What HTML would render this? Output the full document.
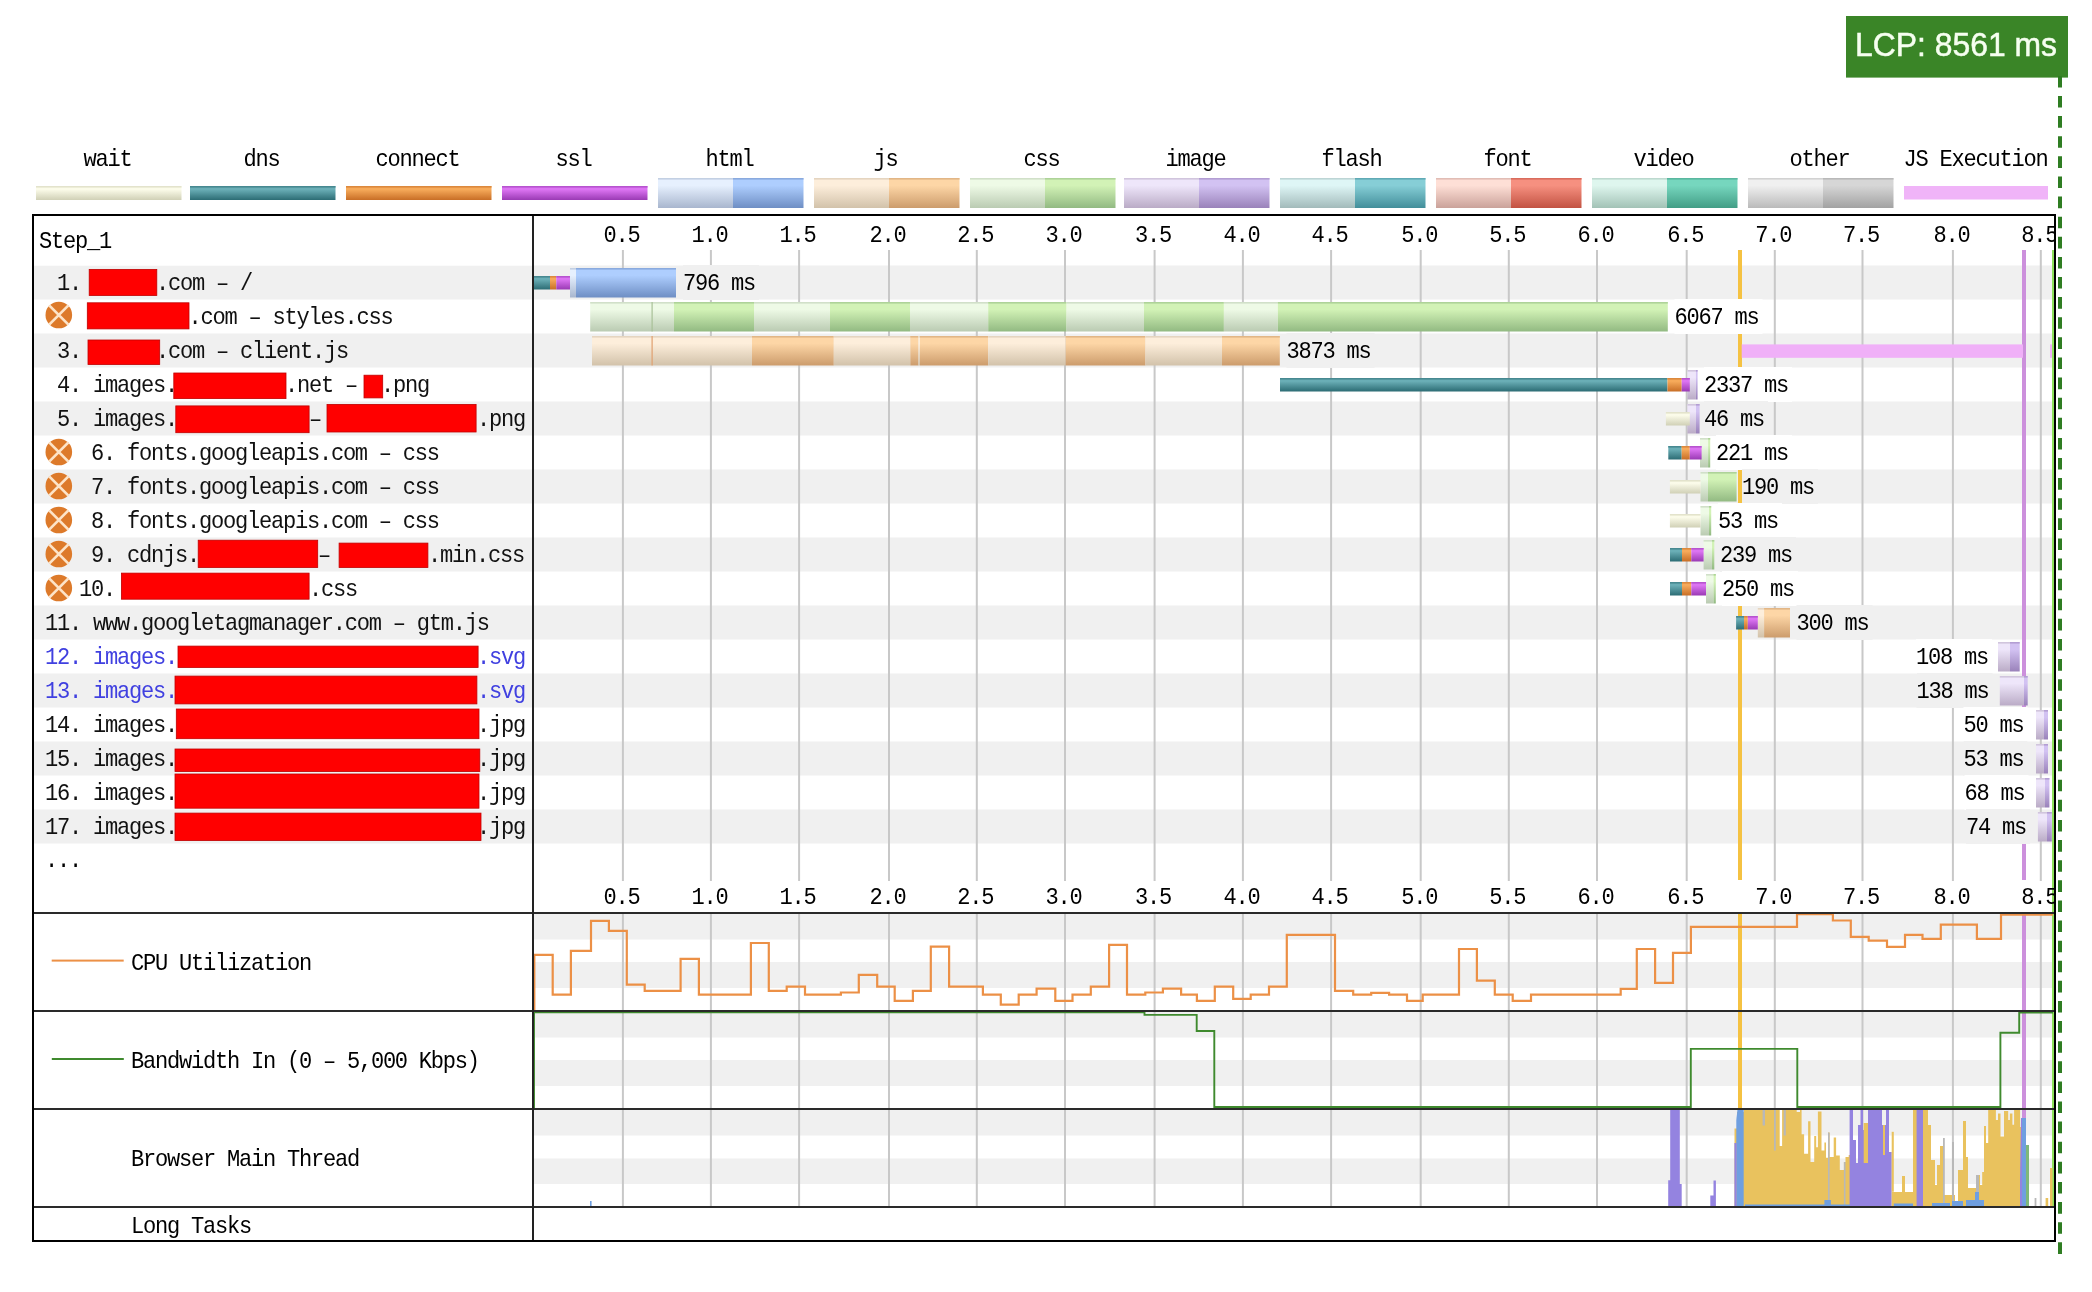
<!DOCTYPE html>
<html><head><meta charset="utf-8"><title>waterfall</title>
<style>html,body{margin:0;padding:0;background:#fff;overflow:hidden;width:2092px;height:1292px} svg{display:block;will-change:transform} </style>
</head><body>
<svg width="2092" height="1292" viewBox="0 0 2092 1292" shape-rendering="geometricPrecision"><defs><linearGradient id="g_wait" x1="0" y1="0" x2="0" y2="1"><stop offset="0" stop-color="#fbfbe9"/><stop offset="0.25" stop-color="#fbfbe9"/><stop offset="1" stop-color="#d0d0b6"/></linearGradient><linearGradient id="g_dns" x1="0" y1="0" x2="0" y2="1"><stop offset="0" stop-color="#6aaeb6"/><stop offset="0.25" stop-color="#6aaeb6"/><stop offset="1" stop-color="#2c6c74"/></linearGradient><linearGradient id="g_connect" x1="0" y1="0" x2="0" y2="1"><stop offset="0" stop-color="#f6aa5a"/><stop offset="0.25" stop-color="#f6aa5a"/><stop offset="1" stop-color="#c86e26"/></linearGradient><linearGradient id="g_ssl" x1="0" y1="0" x2="0" y2="1"><stop offset="0" stop-color="#dc74f2"/><stop offset="0.25" stop-color="#dc74f2"/><stop offset="1" stop-color="#9a3ab4"/></linearGradient><linearGradient id="g_html_l" x1="0" y1="0" x2="0" y2="1"><stop offset="0" stop-color="#e6f0fe"/><stop offset="0.25" stop-color="#e6f0fe"/><stop offset="1" stop-color="#a8b6ce"/></linearGradient><linearGradient id="g_html_d" x1="0" y1="0" x2="0" y2="1"><stop offset="0" stop-color="#aecefe"/><stop offset="0.25" stop-color="#aecefe"/><stop offset="1" stop-color="#6e8ec4"/></linearGradient><linearGradient id="g_js_l" x1="0" y1="0" x2="0" y2="1"><stop offset="0" stop-color="#fdeedb"/><stop offset="0.25" stop-color="#fdeedb"/><stop offset="1" stop-color="#d2c2aa"/></linearGradient><linearGradient id="g_js_d" x1="0" y1="0" x2="0" y2="1"><stop offset="0" stop-color="#fdd6a6"/><stop offset="0.25" stop-color="#fdd6a6"/><stop offset="1" stop-color="#cc9c6c"/></linearGradient><linearGradient id="g_css_l" x1="0" y1="0" x2="0" y2="1"><stop offset="0" stop-color="#eefae6"/><stop offset="0.25" stop-color="#eefae6"/><stop offset="1" stop-color="#bacbb2"/></linearGradient><linearGradient id="g_css_d" x1="0" y1="0" x2="0" y2="1"><stop offset="0" stop-color="#d2f2b6"/><stop offset="0.25" stop-color="#d2f2b6"/><stop offset="1" stop-color="#92ba82"/></linearGradient><linearGradient id="g_img_l" x1="0" y1="0" x2="0" y2="1"><stop offset="0" stop-color="#eee6fa"/><stop offset="0.25" stop-color="#eee6fa"/><stop offset="1" stop-color="#baabc6"/></linearGradient><linearGradient id="g_img_d" x1="0" y1="0" x2="0" y2="1"><stop offset="0" stop-color="#d2c2f2"/><stop offset="0.25" stop-color="#d2c2f2"/><stop offset="1" stop-color="#9a82ba"/></linearGradient><linearGradient id="g_flash_l" x1="0" y1="0" x2="0" y2="1"><stop offset="0" stop-color="#def6f6"/><stop offset="0.25" stop-color="#def6f6"/><stop offset="1" stop-color="#a2baba"/></linearGradient><linearGradient id="g_flash_d" x1="0" y1="0" x2="0" y2="1"><stop offset="0" stop-color="#86ced6"/><stop offset="0.25" stop-color="#86ced6"/><stop offset="1" stop-color="#428e9a"/></linearGradient><linearGradient id="g_font_l" x1="0" y1="0" x2="0" y2="1"><stop offset="0" stop-color="#fedfd6"/><stop offset="0.25" stop-color="#fedfd6"/><stop offset="1" stop-color="#caa29a"/></linearGradient><linearGradient id="g_font_d" x1="0" y1="0" x2="0" y2="1"><stop offset="0" stop-color="#f69080"/><stop offset="0.25" stop-color="#f69080"/><stop offset="1" stop-color="#c25242"/></linearGradient><linearGradient id="g_video_l" x1="0" y1="0" x2="0" y2="1"><stop offset="0" stop-color="#def6ee"/><stop offset="0.25" stop-color="#def6ee"/><stop offset="1" stop-color="#a2c2b6"/></linearGradient><linearGradient id="g_video_d" x1="0" y1="0" x2="0" y2="1"><stop offset="0" stop-color="#76d6be"/><stop offset="0.25" stop-color="#76d6be"/><stop offset="1" stop-color="#429e86"/></linearGradient><linearGradient id="g_other_l" x1="0" y1="0" x2="0" y2="1"><stop offset="0" stop-color="#f0f0f0"/><stop offset="0.25" stop-color="#f0f0f0"/><stop offset="1" stop-color="#bababa"/></linearGradient><linearGradient id="g_other_d" x1="0" y1="0" x2="0" y2="1"><stop offset="0" stop-color="#d6d6d6"/><stop offset="0.25" stop-color="#d6d6d6"/><stop offset="1" stop-color="#a2a2a2"/></linearGradient></defs><rect width="2092" height="1292" fill="#fff"/><rect x="1846.00" y="16.00" width="222.00" height="61.60" fill="#3a8527" />
<text x="1855" y="56.3" stroke="#f6fff0" stroke-width="0.5" style="font-family:'Liberation Sans',sans-serif" font-size="33" fill="#f6fff0" textLength="202" lengthAdjust="spacingAndGlyphs">LCP: 8561 ms</text>
<text transform="translate(83.55,166.00) scale(0.92,1)" font-family="Liberation Mono" font-size="24" letter-spacing="-1.357" fill="#000" stroke="#ffffff" stroke-width="0.0" xml:space="preserve">wait</text>
<rect x="36.00" y="186.00" width="145.50" height="14.00" fill="url(#g_wait)" />
<rect x="36.00" y="186.00" width="145.50" height="1.60" fill="#e3e3cc" />
<text transform="translate(243.55,166.00) scale(0.92,1)" font-family="Liberation Mono" font-size="24" letter-spacing="-1.357" fill="#000" stroke="#ffffff" stroke-width="0.0" xml:space="preserve">dns</text>
<rect x="190.00" y="186.00" width="145.50" height="14.00" fill="url(#g_dns)" />
<rect x="190.00" y="186.00" width="145.50" height="1.60" fill="#478991" />
<text transform="translate(375.55,166.00) scale(0.92,1)" font-family="Liberation Mono" font-size="24" letter-spacing="-1.357" fill="#000" stroke="#ffffff" stroke-width="0.0" xml:space="preserve">connect</text>
<rect x="346.00" y="186.00" width="145.50" height="14.00" fill="url(#g_connect)" />
<rect x="346.00" y="186.00" width="145.50" height="1.60" fill="#dc893d" />
<text transform="translate(555.55,166.00) scale(0.92,1)" font-family="Liberation Mono" font-size="24" letter-spacing="-1.357" fill="#000" stroke="#ffffff" stroke-width="0.0" xml:space="preserve">ssl</text>
<rect x="502.00" y="186.00" width="145.50" height="14.00" fill="url(#g_ssl)" />
<rect x="502.00" y="186.00" width="145.50" height="1.60" fill="#b754cf" />
<text transform="translate(705.55,166.00) scale(0.92,1)" font-family="Liberation Mono" font-size="24" letter-spacing="-1.357" fill="#000" stroke="#ffffff" stroke-width="0.0" xml:space="preserve">html</text>
<rect x="658.00" y="178.00" width="75.00" height="30.00" fill="url(#g_html_l)" />
<rect x="658.00" y="178.00" width="75.00" height="1.60" fill="#c3d0e3" />
<rect x="733.00" y="178.00" width="70.50" height="30.00" fill="url(#g_html_d)" />
<rect x="733.00" y="178.00" width="70.50" height="1.60" fill="#8aaade" />
<text transform="translate(873.55,166.00) scale(0.92,1)" font-family="Liberation Mono" font-size="24" letter-spacing="-1.357" fill="#000" stroke="#ffffff" stroke-width="0.0" xml:space="preserve">js</text>
<rect x="814.00" y="178.00" width="75.00" height="30.00" fill="url(#g_js_l)" />
<rect x="814.00" y="178.00" width="75.00" height="1.60" fill="#e5d5c0" />
<rect x="889.00" y="178.00" width="70.50" height="30.00" fill="url(#g_js_d)" />
<rect x="889.00" y="178.00" width="70.50" height="1.60" fill="#e2b686" />
<text transform="translate(1023.55,166.00) scale(0.92,1)" font-family="Liberation Mono" font-size="24" letter-spacing="-1.357" fill="#000" stroke="#ffffff" stroke-width="0.0" xml:space="preserve">css</text>
<rect x="970.00" y="178.00" width="75.00" height="30.00" fill="url(#g_css_l)" />
<rect x="970.00" y="178.00" width="75.00" height="1.60" fill="#d1e0c9" />
<rect x="1045.00" y="178.00" width="70.50" height="30.00" fill="url(#g_css_d)" />
<rect x="1045.00" y="178.00" width="70.50" height="1.60" fill="#aed399" />
<text transform="translate(1165.55,166.00) scale(0.92,1)" font-family="Liberation Mono" font-size="24" letter-spacing="-1.357" fill="#000" stroke="#ffffff" stroke-width="0.0" xml:space="preserve">image</text>
<rect x="1124.00" y="178.00" width="75.00" height="30.00" fill="url(#g_img_l)" />
<rect x="1124.00" y="178.00" width="75.00" height="1.60" fill="#d1c5dd" />
<rect x="1199.00" y="178.00" width="70.50" height="30.00" fill="url(#g_img_d)" />
<rect x="1199.00" y="178.00" width="70.50" height="1.60" fill="#b39ed3" />
<text transform="translate(1321.55,166.00) scale(0.92,1)" font-family="Liberation Mono" font-size="24" letter-spacing="-1.357" fill="#000" stroke="#ffffff" stroke-width="0.0" xml:space="preserve">flash</text>
<rect x="1280.00" y="178.00" width="75.00" height="30.00" fill="url(#g_flash_l)" />
<rect x="1280.00" y="178.00" width="75.00" height="1.60" fill="#bdd5d5" />
<rect x="1355.00" y="178.00" width="70.50" height="30.00" fill="url(#g_flash_d)" />
<rect x="1355.00" y="178.00" width="70.50" height="1.60" fill="#60aab5" />
<text transform="translate(1483.55,166.00) scale(0.92,1)" font-family="Liberation Mono" font-size="24" letter-spacing="-1.357" fill="#000" stroke="#ffffff" stroke-width="0.0" xml:space="preserve">font</text>
<rect x="1436.00" y="178.00" width="75.00" height="30.00" fill="url(#g_font_l)" />
<rect x="1436.00" y="178.00" width="75.00" height="1.60" fill="#e1bdb5" />
<rect x="1511.00" y="178.00" width="70.50" height="30.00" fill="url(#g_font_d)" />
<rect x="1511.00" y="178.00" width="70.50" height="1.60" fill="#d96d5d" />
<text transform="translate(1633.55,166.00) scale(0.92,1)" font-family="Liberation Mono" font-size="24" letter-spacing="-1.357" fill="#000" stroke="#ffffff" stroke-width="0.0" xml:space="preserve">video</text>
<rect x="1592.00" y="178.00" width="75.00" height="30.00" fill="url(#g_video_l)" />
<rect x="1592.00" y="178.00" width="75.00" height="1.60" fill="#bdd9cf" />
<rect x="1667.00" y="178.00" width="70.50" height="30.00" fill="url(#g_video_d)" />
<rect x="1667.00" y="178.00" width="70.50" height="1.60" fill="#59b79f" />
<text transform="translate(1789.55,166.00) scale(0.92,1)" font-family="Liberation Mono" font-size="24" letter-spacing="-1.357" fill="#000" stroke="#ffffff" stroke-width="0.0" xml:space="preserve">other</text>
<rect x="1748.00" y="178.00" width="75.00" height="30.00" fill="url(#g_other_l)" />
<rect x="1748.00" y="178.00" width="75.00" height="1.60" fill="#d2d2d2" />
<rect x="1823.00" y="178.00" width="70.50" height="30.00" fill="url(#g_other_d)" />
<rect x="1823.00" y="178.00" width="70.50" height="1.60" fill="#b9b9b9" />
<text transform="translate(1903.55,166.00) scale(0.92,1)" font-family="Liberation Mono" font-size="24" letter-spacing="-1.357" fill="#000" stroke="#ffffff" stroke-width="0.0" xml:space="preserve">JS Execution</text>
<rect x="1904.00" y="186.00" width="144.00" height="13.50" fill="#f0b4f8" />
<rect x="34.00" y="265.50" width="2020.00" height="34.00" fill="#f0f0f0" />
<rect x="34.00" y="333.50" width="2020.00" height="34.00" fill="#f0f0f0" />
<rect x="34.00" y="401.50" width="2020.00" height="34.00" fill="#f0f0f0" />
<rect x="34.00" y="469.50" width="2020.00" height="34.00" fill="#f0f0f0" />
<rect x="34.00" y="537.50" width="2020.00" height="34.00" fill="#f0f0f0" />
<rect x="34.00" y="605.50" width="2020.00" height="34.00" fill="#f0f0f0" />
<rect x="34.00" y="673.50" width="2020.00" height="34.00" fill="#f0f0f0" />
<rect x="34.00" y="741.50" width="2020.00" height="34.00" fill="#f0f0f0" />
<rect x="34.00" y="809.50" width="2020.00" height="34.00" fill="#f0f0f0" />
<rect x="621.90" y="250.00" width="2.00" height="631.00" fill="#c8c8c8" />
<rect x="709.90" y="250.00" width="2.00" height="631.00" fill="#c8c8c8" />
<rect x="798.10" y="250.00" width="2.00" height="631.00" fill="#c8c8c8" />
<rect x="888.00" y="250.00" width="2.00" height="631.00" fill="#c8c8c8" />
<rect x="975.80" y="250.00" width="2.00" height="631.00" fill="#c8c8c8" />
<rect x="1064.00" y="250.00" width="2.00" height="631.00" fill="#c8c8c8" />
<rect x="1153.60" y="250.00" width="2.00" height="631.00" fill="#c8c8c8" />
<rect x="1241.90" y="250.00" width="2.00" height="631.00" fill="#c8c8c8" />
<rect x="1330.10" y="250.00" width="2.00" height="631.00" fill="#c8c8c8" />
<rect x="1419.70" y="250.00" width="2.00" height="631.00" fill="#c8c8c8" />
<rect x="1507.80" y="250.00" width="2.00" height="631.00" fill="#c8c8c8" />
<rect x="1596.00" y="250.00" width="2.00" height="631.00" fill="#c8c8c8" />
<rect x="1685.70" y="250.00" width="2.00" height="631.00" fill="#c8c8c8" />
<rect x="1773.80" y="250.00" width="2.00" height="631.00" fill="#c8c8c8" />
<rect x="1861.50" y="250.00" width="2.00" height="631.00" fill="#c8c8c8" />
<rect x="1951.90" y="250.00" width="2.00" height="631.00" fill="#c8c8c8" />
<rect x="2039.80" y="250.00" width="2.00" height="631.00" fill="#c8c8c8" />
<rect x="534.00" y="914.00" width="1520.00" height="25.50" fill="#f0f0f0" />
<rect x="534.00" y="962.00" width="1520.00" height="26.00" fill="#f0f0f0" />
<rect x="534.00" y="1012.00" width="1520.00" height="25.50" fill="#f0f0f0" />
<rect x="534.00" y="1060.00" width="1520.00" height="26.00" fill="#f0f0f0" />
<rect x="534.00" y="1110.00" width="1520.00" height="25.50" fill="#f0f0f0" />
<rect x="534.00" y="1158.50" width="1520.00" height="25.50" fill="#f0f0f0" />
<rect x="621.90" y="914.00" width="2.00" height="292.00" fill="#c8c8c8" />
<rect x="709.90" y="914.00" width="2.00" height="292.00" fill="#c8c8c8" />
<rect x="798.10" y="914.00" width="2.00" height="292.00" fill="#c8c8c8" />
<rect x="888.00" y="914.00" width="2.00" height="292.00" fill="#c8c8c8" />
<rect x="975.80" y="914.00" width="2.00" height="292.00" fill="#c8c8c8" />
<rect x="1064.00" y="914.00" width="2.00" height="292.00" fill="#c8c8c8" />
<rect x="1153.60" y="914.00" width="2.00" height="292.00" fill="#c8c8c8" />
<rect x="1241.90" y="914.00" width="2.00" height="292.00" fill="#c8c8c8" />
<rect x="1330.10" y="914.00" width="2.00" height="292.00" fill="#c8c8c8" />
<rect x="1419.70" y="914.00" width="2.00" height="292.00" fill="#c8c8c8" />
<rect x="1507.80" y="914.00" width="2.00" height="292.00" fill="#c8c8c8" />
<rect x="1596.00" y="914.00" width="2.00" height="292.00" fill="#c8c8c8" />
<rect x="1685.70" y="914.00" width="2.00" height="292.00" fill="#c8c8c8" />
<rect x="1773.80" y="914.00" width="2.00" height="292.00" fill="#c8c8c8" />
<rect x="1861.50" y="914.00" width="2.00" height="292.00" fill="#c8c8c8" />
<rect x="1951.90" y="914.00" width="2.00" height="292.00" fill="#c8c8c8" />
<rect x="2039.80" y="914.00" width="2.00" height="292.00" fill="#c8c8c8" />
<rect x="1738.00" y="250.00" width="4.00" height="630.00" fill="#f5c242" />
<rect x="1738.00" y="914.00" width="4.00" height="292.00" fill="#f5c242" />
<rect x="2022.00" y="250.00" width="4.00" height="630.00" fill="#cc90dc" />
<rect x="2022.00" y="914.00" width="4.00" height="292.00" fill="#cc90dc" />
<rect x="2052.00" y="250.00" width="2.00" height="956.00" fill="#8ee05a" />
<rect x="570.00" y="268.00" width="6.00" height="29.50" fill="url(#g_html_l)" />
<rect x="570.00" y="268.00" width="6.00" height="1.60" fill="#c3d0e3" />
<rect x="576.00" y="268.00" width="100.00" height="29.50" fill="url(#g_html_d)" />
<rect x="576.00" y="268.00" width="100.00" height="1.60" fill="#8aaade" />
<rect x="534.00" y="276.00" width="16.00" height="13.50" fill="url(#g_dns)" />
<rect x="534.00" y="276.00" width="16.00" height="1.60" fill="#478991" />
<rect x="550.00" y="276.00" width="6.30" height="13.50" fill="url(#g_connect)" />
<rect x="550.00" y="276.00" width="6.30" height="1.60" fill="#dc893d" />
<rect x="556.30" y="276.00" width="13.70" height="13.50" fill="url(#g_ssl)" />
<rect x="556.30" y="276.00" width="13.70" height="1.60" fill="#b754cf" />
<rect x="590.20" y="302.00" width="61.80" height="29.50" fill="url(#g_css_l)" />
<rect x="590.20" y="302.00" width="61.80" height="1.60" fill="#d1e0c9" />
<rect x="652.00" y="302.00" width="22.00" height="29.50" fill="url(#g_css_l)" />
<rect x="652.00" y="302.00" width="22.00" height="1.60" fill="#d1e0c9" />
<rect x="674.00" y="302.00" width="80.00" height="29.50" fill="url(#g_css_d)" />
<rect x="674.00" y="302.00" width="80.00" height="1.60" fill="#aed399" />
<rect x="754.00" y="302.00" width="76.00" height="29.50" fill="url(#g_css_l)" />
<rect x="754.00" y="302.00" width="76.00" height="1.60" fill="#d1e0c9" />
<rect x="830.00" y="302.00" width="80.00" height="29.50" fill="url(#g_css_d)" />
<rect x="830.00" y="302.00" width="80.00" height="1.60" fill="#aed399" />
<rect x="910.00" y="302.00" width="78.20" height="29.50" fill="url(#g_css_l)" />
<rect x="910.00" y="302.00" width="78.20" height="1.60" fill="#d1e0c9" />
<rect x="988.20" y="302.00" width="78.40" height="29.50" fill="url(#g_css_d)" />
<rect x="988.20" y="302.00" width="78.40" height="1.60" fill="#aed399" />
<rect x="1066.60" y="302.00" width="77.40" height="29.50" fill="url(#g_css_l)" />
<rect x="1066.60" y="302.00" width="77.40" height="1.60" fill="#d1e0c9" />
<rect x="1144.00" y="302.00" width="79.90" height="29.50" fill="url(#g_css_d)" />
<rect x="1144.00" y="302.00" width="79.90" height="1.60" fill="#aed399" />
<rect x="1223.90" y="302.00" width="53.90" height="29.50" fill="url(#g_css_l)" />
<rect x="1223.90" y="302.00" width="53.90" height="1.60" fill="#d1e0c9" />
<rect x="1277.80" y="302.00" width="390.00" height="29.50" fill="url(#g_css_d)" />
<rect x="1277.80" y="302.00" width="390.00" height="1.60" fill="#aed399" />
<rect x="651.50" y="302.00" width="1.20" height="29.50" fill="#a8c098" />
<rect x="592.00" y="336.00" width="60.00" height="29.50" fill="url(#g_js_l)" />
<rect x="592.00" y="336.00" width="60.00" height="1.60" fill="#e5d5c0" />
<rect x="652.00" y="336.00" width="100.00" height="29.50" fill="url(#g_js_l)" />
<rect x="652.00" y="336.00" width="100.00" height="1.60" fill="#e5d5c0" />
<rect x="752.00" y="336.00" width="81.80" height="29.50" fill="url(#g_js_d)" />
<rect x="752.00" y="336.00" width="81.80" height="1.60" fill="#e2b686" />
<rect x="833.80" y="336.00" width="76.50" height="29.50" fill="url(#g_js_l)" />
<rect x="833.80" y="336.00" width="76.50" height="1.60" fill="#e5d5c0" />
<rect x="910.30" y="336.00" width="8.20" height="29.50" fill="url(#g_js_d)" />
<rect x="910.30" y="336.00" width="8.20" height="1.60" fill="#e2b686" />
<rect x="918.50" y="336.00" width="1.50" height="29.50" fill="url(#g_js_l)" />
<rect x="918.50" y="336.00" width="1.50" height="1.60" fill="#e5d5c0" />
<rect x="920.00" y="336.00" width="68.20" height="29.50" fill="url(#g_js_d)" />
<rect x="920.00" y="336.00" width="68.20" height="1.60" fill="#e2b686" />
<rect x="988.20" y="336.00" width="77.40" height="29.50" fill="url(#g_js_l)" />
<rect x="988.20" y="336.00" width="77.40" height="1.60" fill="#e5d5c0" />
<rect x="1065.60" y="336.00" width="79.90" height="29.50" fill="url(#g_js_d)" />
<rect x="1065.60" y="336.00" width="79.90" height="1.60" fill="#e2b686" />
<rect x="1145.50" y="336.00" width="76.50" height="29.50" fill="url(#g_js_l)" />
<rect x="1145.50" y="336.00" width="76.50" height="1.60" fill="#e5d5c0" />
<rect x="1222.00" y="336.00" width="57.80" height="29.50" fill="url(#g_js_d)" />
<rect x="1222.00" y="336.00" width="57.80" height="1.60" fill="#e2b686" />
<rect x="651.50" y="336.00" width="1.20" height="29.50" fill="#e0a070" />
<rect x="1741.70" y="344.40" width="281.30" height="13.40" fill="#f0b0f8" />
<rect x="2050.00" y="344.40" width="4.00" height="13.40" fill="#f0b0f8" />
<rect x="1687.40" y="370.00" width="8.50" height="29.50" fill="url(#g_img_l)" />
<rect x="1687.40" y="370.00" width="8.50" height="1.60" fill="#d1c5dd" />
<rect x="1695.90" y="370.00" width="1.70" height="29.50" fill="url(#g_img_d)" />
<rect x="1695.90" y="370.00" width="1.70" height="1.60" fill="#b39ed3" />
<rect x="1280.00" y="378.00" width="387.50" height="13.50" fill="url(#g_dns)" />
<rect x="1280.00" y="378.00" width="387.50" height="1.60" fill="#478991" />
<rect x="1667.50" y="378.00" width="14.20" height="13.50" fill="url(#g_connect)" />
<rect x="1667.50" y="378.00" width="14.20" height="1.60" fill="#dc893d" />
<rect x="1681.70" y="378.00" width="8.10" height="13.50" fill="url(#g_ssl)" />
<rect x="1681.70" y="378.00" width="8.10" height="1.60" fill="#b754cf" />
<rect x="1687.40" y="404.00" width="8.60" height="29.50" fill="url(#g_img_l)" />
<rect x="1687.40" y="404.00" width="8.60" height="1.60" fill="#d1c5dd" />
<rect x="1696.00" y="404.00" width="3.60" height="29.50" fill="url(#g_img_d)" />
<rect x="1696.00" y="404.00" width="3.60" height="1.60" fill="#b39ed3" />
<rect x="1665.90" y="412.00" width="23.90" height="13.50" fill="url(#g_wait)" />
<rect x="1665.90" y="412.00" width="23.90" height="1.60" fill="#e3e3cc" />
<rect x="1700.00" y="438.00" width="8.10" height="29.50" fill="url(#g_css_l)" />
<rect x="1700.00" y="438.00" width="8.10" height="1.60" fill="#d1e0c9" />
<rect x="1708.10" y="438.00" width="2.10" height="29.50" fill="url(#g_css_d)" />
<rect x="1708.10" y="438.00" width="2.10" height="1.60" fill="#aed399" />
<rect x="1668.30" y="446.00" width="13.40" height="13.50" fill="url(#g_dns)" />
<rect x="1668.30" y="446.00" width="13.40" height="1.60" fill="#478991" />
<rect x="1681.70" y="446.00" width="8.10" height="13.50" fill="url(#g_connect)" />
<rect x="1681.70" y="446.00" width="8.10" height="1.60" fill="#dc893d" />
<rect x="1689.80" y="446.00" width="11.80" height="13.50" fill="url(#g_ssl)" />
<rect x="1689.80" y="446.00" width="11.80" height="1.60" fill="#b754cf" />
<rect x="1700.50" y="472.00" width="7.50" height="29.50" fill="url(#g_css_l)" />
<rect x="1700.50" y="472.00" width="7.50" height="1.60" fill="#d1e0c9" />
<rect x="1708.00" y="472.00" width="28.60" height="29.50" fill="url(#g_css_d)" />
<rect x="1708.00" y="472.00" width="28.60" height="1.60" fill="#aed399" />
<rect x="1669.90" y="480.00" width="30.60" height="13.50" fill="url(#g_wait)" />
<rect x="1669.90" y="480.00" width="30.60" height="1.60" fill="#e3e3cc" />
<rect x="1700.50" y="506.00" width="8.50" height="29.50" fill="url(#g_css_l)" />
<rect x="1700.50" y="506.00" width="8.50" height="1.60" fill="#d1e0c9" />
<rect x="1709.00" y="506.00" width="2.20" height="29.50" fill="url(#g_css_d)" />
<rect x="1709.00" y="506.00" width="2.20" height="1.60" fill="#aed399" />
<rect x="1669.90" y="514.00" width="30.60" height="13.50" fill="url(#g_wait)" />
<rect x="1669.90" y="514.00" width="30.60" height="1.60" fill="#e3e3cc" />
<rect x="1703.60" y="540.00" width="8.40" height="29.50" fill="url(#g_css_l)" />
<rect x="1703.60" y="540.00" width="8.40" height="1.60" fill="#d1e0c9" />
<rect x="1712.00" y="540.00" width="2.30" height="29.50" fill="url(#g_css_d)" />
<rect x="1712.00" y="540.00" width="2.30" height="1.60" fill="#aed399" />
<rect x="1670.00" y="548.00" width="12.00" height="13.50" fill="url(#g_dns)" />
<rect x="1670.00" y="548.00" width="12.00" height="1.60" fill="#478991" />
<rect x="1682.00" y="548.00" width="9.30" height="13.50" fill="url(#g_connect)" />
<rect x="1682.00" y="548.00" width="9.30" height="1.60" fill="#dc893d" />
<rect x="1691.30" y="548.00" width="12.30" height="13.50" fill="url(#g_ssl)" />
<rect x="1691.30" y="548.00" width="12.30" height="1.60" fill="#b754cf" />
<rect x="1706.00" y="574.00" width="7.50" height="29.50" fill="url(#g_css_l)" />
<rect x="1706.00" y="574.00" width="7.50" height="1.60" fill="#d1e0c9" />
<rect x="1713.50" y="574.00" width="2.30" height="29.50" fill="url(#g_css_d)" />
<rect x="1713.50" y="574.00" width="2.30" height="1.60" fill="#aed399" />
<rect x="1670.00" y="582.00" width="12.00" height="13.50" fill="url(#g_dns)" />
<rect x="1670.00" y="582.00" width="12.00" height="1.60" fill="#478991" />
<rect x="1682.00" y="582.00" width="9.30" height="13.50" fill="url(#g_connect)" />
<rect x="1682.00" y="582.00" width="9.30" height="1.60" fill="#dc893d" />
<rect x="1691.30" y="582.00" width="14.70" height="13.50" fill="url(#g_ssl)" />
<rect x="1691.30" y="582.00" width="14.70" height="1.60" fill="#b754cf" />
<rect x="1757.80" y="608.00" width="6.30" height="29.50" fill="url(#g_js_l)" />
<rect x="1757.80" y="608.00" width="6.30" height="1.60" fill="#e5d5c0" />
<rect x="1764.10" y="608.00" width="25.90" height="29.50" fill="url(#g_js_d)" />
<rect x="1764.10" y="608.00" width="25.90" height="1.60" fill="#e2b686" />
<rect x="1736.10" y="616.00" width="7.90" height="13.50" fill="url(#g_dns)" />
<rect x="1736.10" y="616.00" width="7.90" height="1.60" fill="#478991" />
<rect x="1744.00" y="616.00" width="3.80" height="13.50" fill="url(#g_connect)" />
<rect x="1744.00" y="616.00" width="3.80" height="1.60" fill="#dc893d" />
<rect x="1747.80" y="616.00" width="10.00" height="13.50" fill="url(#g_ssl)" />
<rect x="1747.80" y="616.00" width="10.00" height="1.60" fill="#b754cf" />
<rect x="1998.00" y="642.00" width="12.00" height="29.50" fill="url(#g_img_l)" />
<rect x="1998.00" y="642.00" width="12.00" height="1.60" fill="#d1c5dd" />
<rect x="2010.00" y="642.00" width="9.70" height="29.50" fill="url(#g_img_d)" />
<rect x="2010.00" y="642.00" width="9.70" height="1.60" fill="#b39ed3" />
<rect x="1999.80" y="676.00" width="24.20" height="29.50" fill="url(#g_img_l)" />
<rect x="1999.80" y="676.00" width="24.20" height="1.60" fill="#d1c5dd" />
<rect x="2024.00" y="676.00" width="3.70" height="29.50" fill="url(#g_img_d)" />
<rect x="2024.00" y="676.00" width="3.70" height="1.60" fill="#b39ed3" />
<rect x="2036.00" y="710.00" width="8.00" height="29.50" fill="url(#g_img_l)" />
<rect x="2036.00" y="710.00" width="8.00" height="1.60" fill="#d1c5dd" />
<rect x="2044.00" y="710.00" width="4.00" height="29.50" fill="url(#g_img_d)" />
<rect x="2044.00" y="710.00" width="4.00" height="1.60" fill="#b39ed3" />
<rect x="2036.00" y="744.00" width="8.00" height="29.50" fill="url(#g_img_l)" />
<rect x="2036.00" y="744.00" width="8.00" height="1.60" fill="#d1c5dd" />
<rect x="2044.00" y="744.00" width="4.00" height="29.50" fill="url(#g_img_d)" />
<rect x="2044.00" y="744.00" width="4.00" height="1.60" fill="#b39ed3" />
<rect x="2036.00" y="778.00" width="9.00" height="29.50" fill="url(#g_img_l)" />
<rect x="2036.00" y="778.00" width="9.00" height="1.60" fill="#d1c5dd" />
<rect x="2045.00" y="778.00" width="4.40" height="29.50" fill="url(#g_img_d)" />
<rect x="2045.00" y="778.00" width="4.40" height="1.60" fill="#b39ed3" />
<rect x="2037.90" y="812.00" width="9.10" height="29.50" fill="url(#g_img_l)" />
<rect x="2037.90" y="812.00" width="9.10" height="1.60" fill="#d1c5dd" />
<rect x="2047.00" y="812.00" width="4.80" height="29.50" fill="url(#g_img_d)" />
<rect x="2047.00" y="812.00" width="4.80" height="1.60" fill="#b39ed3" />
<rect x="683.00" y="265.00" width="76.00" height="35.00" fill="#f0f0f0" />
<text transform="translate(683.00,290.00) scale(0.92,1)" font-family="Liberation Mono" font-size="24" letter-spacing="-1.357" fill="#000" stroke="#f0f0f0" stroke-width="0.0" xml:space="preserve">796 ms</text>
<rect x="1674.50" y="299.00" width="88.00" height="35.00" fill="#ffffff" />
<text transform="translate(1674.50,324.00) scale(0.92,1)" font-family="Liberation Mono" font-size="24" letter-spacing="-1.357" fill="#000" stroke="#ffffff" stroke-width="0.0" xml:space="preserve">6067 ms</text>
<rect x="1286.50" y="333.00" width="88.00" height="35.00" fill="#f0f0f0" />
<text transform="translate(1286.50,358.00) scale(0.92,1)" font-family="Liberation Mono" font-size="24" letter-spacing="-1.357" fill="#000" stroke="#f0f0f0" stroke-width="0.0" xml:space="preserve">3873 ms</text>
<rect x="1704.00" y="367.00" width="88.00" height="35.00" fill="#ffffff" />
<text transform="translate(1704.00,392.00) scale(0.92,1)" font-family="Liberation Mono" font-size="24" letter-spacing="-1.357" fill="#000" stroke="#ffffff" stroke-width="0.0" xml:space="preserve">2337 ms</text>
<rect x="1704.00" y="401.00" width="64.00" height="35.00" fill="#f0f0f0" />
<text transform="translate(1704.00,426.00) scale(0.92,1)" font-family="Liberation Mono" font-size="24" letter-spacing="-1.357" fill="#000" stroke="#f0f0f0" stroke-width="0.0" xml:space="preserve">46 ms</text>
<rect x="1716.00" y="435.00" width="76.00" height="35.00" fill="#ffffff" />
<text transform="translate(1716.00,460.00) scale(0.92,1)" font-family="Liberation Mono" font-size="24" letter-spacing="-1.357" fill="#000" stroke="#ffffff" stroke-width="0.0" xml:space="preserve">221 ms</text>
<rect x="1742.00" y="469.00" width="76.00" height="35.00" fill="#f0f0f0" />
<text transform="translate(1742.00,494.00) scale(0.92,1)" font-family="Liberation Mono" font-size="24" letter-spacing="-1.357" fill="#000" stroke="#f0f0f0" stroke-width="0.0" xml:space="preserve">190 ms</text>
<rect x="1718.00" y="503.00" width="64.00" height="35.00" fill="#ffffff" />
<text transform="translate(1718.00,528.00) scale(0.92,1)" font-family="Liberation Mono" font-size="24" letter-spacing="-1.357" fill="#000" stroke="#ffffff" stroke-width="0.0" xml:space="preserve">53 ms</text>
<rect x="1720.00" y="537.00" width="76.00" height="35.00" fill="#f0f0f0" />
<text transform="translate(1720.00,562.00) scale(0.92,1)" font-family="Liberation Mono" font-size="24" letter-spacing="-1.357" fill="#000" stroke="#f0f0f0" stroke-width="0.0" xml:space="preserve">239 ms</text>
<rect x="1722.00" y="571.00" width="76.00" height="35.00" fill="#ffffff" />
<text transform="translate(1722.00,596.00) scale(0.92,1)" font-family="Liberation Mono" font-size="24" letter-spacing="-1.357" fill="#000" stroke="#ffffff" stroke-width="0.0" xml:space="preserve">250 ms</text>
<rect x="1796.50" y="605.00" width="76.00" height="35.00" fill="#f0f0f0" />
<text transform="translate(1796.50,630.00) scale(0.92,1)" font-family="Liberation Mono" font-size="24" letter-spacing="-1.357" fill="#000" stroke="#f0f0f0" stroke-width="0.0" xml:space="preserve">300 ms</text>
<rect x="1916.00" y="639.00" width="76.00" height="35.00" fill="#ffffff" />
<text transform="translate(1916.00,664.00) scale(0.92,1)" font-family="Liberation Mono" font-size="24" letter-spacing="-1.357" fill="#000" stroke="#ffffff" stroke-width="0.0" xml:space="preserve">108 ms</text>
<rect x="1916.50" y="673.00" width="76.00" height="35.00" fill="#f0f0f0" />
<text transform="translate(1916.50,698.00) scale(0.92,1)" font-family="Liberation Mono" font-size="24" letter-spacing="-1.357" fill="#000" stroke="#f0f0f0" stroke-width="0.0" xml:space="preserve">138 ms</text>
<rect x="1963.50" y="707.00" width="64.00" height="35.00" fill="#ffffff" />
<text transform="translate(1963.50,732.00) scale(0.92,1)" font-family="Liberation Mono" font-size="24" letter-spacing="-1.357" fill="#000" stroke="#ffffff" stroke-width="0.0" xml:space="preserve">50 ms</text>
<rect x="1963.50" y="741.00" width="64.00" height="35.00" fill="#f0f0f0" />
<text transform="translate(1963.50,766.00) scale(0.92,1)" font-family="Liberation Mono" font-size="24" letter-spacing="-1.357" fill="#000" stroke="#f0f0f0" stroke-width="0.0" xml:space="preserve">53 ms</text>
<rect x="1964.50" y="775.00" width="64.00" height="35.00" fill="#ffffff" />
<text transform="translate(1964.50,800.00) scale(0.92,1)" font-family="Liberation Mono" font-size="24" letter-spacing="-1.357" fill="#000" stroke="#ffffff" stroke-width="0.0" xml:space="preserve">68 ms</text>
<rect x="1966.00" y="809.00" width="64.00" height="35.00" fill="#f0f0f0" />
<text transform="translate(1966.00,834.00) scale(0.92,1)" font-family="Liberation Mono" font-size="24" letter-spacing="-1.357" fill="#000" stroke="#f0f0f0" stroke-width="0.0" xml:space="preserve">74 ms</text>
<rect x="2052.00" y="250.00" width="2.00" height="956.00" fill="#8ee05a" />
<rect x="34.00" y="216.00" width="498.00" height="49.50" fill="#ffffff" />
<text transform="translate(39.00,248.00) scale(0.92,1)" font-family="Liberation Mono" font-size="24" letter-spacing="-1.357" fill="#000" stroke="#ffffff" stroke-width="0.0" xml:space="preserve">Step_1</text>
<text transform="translate(45.00,290.00) scale(0.92,1)" font-family="Liberation Mono" font-size="24" letter-spacing="-1.357" fill="#111" stroke="#f0f0f0" stroke-width="0.0" xml:space="preserve"> 1. </text>
<rect x="89.2" y="269.4" width="67.6" height="26.1" fill="#ff0000" stroke="#c00000" stroke-width="0.8"/>
<text transform="translate(156.00,290.00) scale(0.92,1)" font-family="Liberation Mono" font-size="24" letter-spacing="-1.357" fill="#111" stroke="#f0f0f0" stroke-width="0.0" xml:space="preserve">.com – /</text>
<circle cx="58.8" cy="315" r="13.3" fill="#dd7a2a"/>
<path d="M49.2,305.4 L68.4,324.6 M68.4,305.4 L49.2,324.6" stroke="#fde4c8" stroke-width="2.7"/>
<rect x="87.3" y="302.8" width="101.7" height="26.1" fill="#ff0000" stroke="#c00000" stroke-width="0.8"/>
<text transform="translate(188.50,324.00) scale(0.92,1)" font-family="Liberation Mono" font-size="24" letter-spacing="-1.357" fill="#111" stroke="#ffffff" stroke-width="0.0" xml:space="preserve">.com – styles.css</text>
<text transform="translate(45.00,358.00) scale(0.92,1)" font-family="Liberation Mono" font-size="24" letter-spacing="-1.357" fill="#111" stroke="#f0f0f0" stroke-width="0.0" xml:space="preserve"> 3. </text>
<rect x="88.0" y="340.0" width="71.7" height="24.5" fill="#ff0000" stroke="#c00000" stroke-width="0.8"/>
<text transform="translate(156.00,358.00) scale(0.92,1)" font-family="Liberation Mono" font-size="24" letter-spacing="-1.357" fill="#111" stroke="#f0f0f0" stroke-width="0.0" xml:space="preserve">.com – client.js</text>
<text transform="translate(45.00,392.00) scale(0.92,1)" font-family="Liberation Mono" font-size="24" letter-spacing="-1.357" fill="#111" stroke="#ffffff" stroke-width="0.0" xml:space="preserve"> 4. images.</text>
<rect x="173.8" y="373.0" width="112.2" height="25.6" fill="#ff0000" stroke="#c00000" stroke-width="0.8"/>
<text transform="translate(285.00,392.00) scale(0.92,1)" font-family="Liberation Mono" font-size="24" letter-spacing="-1.357" fill="#111" stroke="#ffffff" stroke-width="0.0" xml:space="preserve">.net – </text>
<rect x="364.0" y="375.2" width="18.7" height="22.7" fill="#ff0000" stroke="#c00000" stroke-width="0.8"/>
<text transform="translate(381.00,392.00) scale(0.92,1)" font-family="Liberation Mono" font-size="24" letter-spacing="-1.357" fill="#111" stroke="#ffffff" stroke-width="0.0" xml:space="preserve">.png</text>
<text transform="translate(45.00,426.00) scale(0.92,1)" font-family="Liberation Mono" font-size="24" letter-spacing="-1.357" fill="#111" stroke="#f0f0f0" stroke-width="0.0" xml:space="preserve"> 5. images.</text>
<rect x="175.8" y="405.9" width="133.3" height="26.8" fill="#ff0000" stroke="#c00000" stroke-width="0.8"/>
<text transform="translate(309.00,426.00) scale(0.92,1)" font-family="Liberation Mono" font-size="24" letter-spacing="-1.357" fill="#111" stroke="#f0f0f0" stroke-width="0.0" xml:space="preserve">–</text>
<rect x="327.0" y="404.4" width="149.1" height="27.6" fill="#ff0000" stroke="#c00000" stroke-width="0.8"/>
<text transform="translate(477.00,426.00) scale(0.92,1)" font-family="Liberation Mono" font-size="24" letter-spacing="-1.357" fill="#111" stroke="#f0f0f0" stroke-width="0.0" xml:space="preserve">.png</text>
<circle cx="58.8" cy="452.0" r="13.3" fill="#dd7a2a"/>
<path d="M49.2,442.4 L68.4,461.6 M68.4,442.4 L49.2,461.6" stroke="#fde4c8" stroke-width="2.7"/>
<text transform="translate(91.00,460.00) scale(0.92,1)" font-family="Liberation Mono" font-size="24" letter-spacing="-1.357" fill="#111" stroke="#ffffff" stroke-width="0.0" xml:space="preserve">6. fonts.googleapis.com – css</text>
<circle cx="58.8" cy="486.0" r="13.3" fill="#dd7a2a"/>
<path d="M49.2,476.4 L68.4,495.6 M68.4,476.4 L49.2,495.6" stroke="#fde4c8" stroke-width="2.7"/>
<text transform="translate(91.00,494.00) scale(0.92,1)" font-family="Liberation Mono" font-size="24" letter-spacing="-1.357" fill="#111" stroke="#f0f0f0" stroke-width="0.0" xml:space="preserve">7. fonts.googleapis.com – css</text>
<circle cx="58.8" cy="520.0" r="13.3" fill="#dd7a2a"/>
<path d="M49.2,510.4 L68.4,529.6 M68.4,510.4 L49.2,529.6" stroke="#fde4c8" stroke-width="2.7"/>
<text transform="translate(91.00,528.00) scale(0.92,1)" font-family="Liberation Mono" font-size="24" letter-spacing="-1.357" fill="#111" stroke="#ffffff" stroke-width="0.0" xml:space="preserve">8. fonts.googleapis.com – css</text>
<circle cx="58.8" cy="554.0" r="13.3" fill="#dd7a2a"/>
<path d="M49.2,544.4 L68.4,563.6 M68.4,544.4 L49.2,563.6" stroke="#fde4c8" stroke-width="2.7"/>
<text transform="translate(91.00,562.00) scale(0.92,1)" font-family="Liberation Mono" font-size="24" letter-spacing="-1.357" fill="#111" stroke="#f0f0f0" stroke-width="0.0" xml:space="preserve">9. cdnjs.</text>
<rect x="198.2" y="540.2" width="119.5" height="27.3" fill="#ff0000" stroke="#c00000" stroke-width="0.8"/>
<text transform="translate(318.00,562.00) scale(0.92,1)" font-family="Liberation Mono" font-size="24" letter-spacing="-1.357" fill="#111" stroke="#f0f0f0" stroke-width="0.0" xml:space="preserve">–</text>
<rect x="339.1" y="543.1" width="88.8" height="24.4" fill="#ff0000" stroke="#c00000" stroke-width="0.8"/>
<text transform="translate(428.00,562.00) scale(0.92,1)" font-family="Liberation Mono" font-size="24" letter-spacing="-1.357" fill="#111" stroke="#f0f0f0" stroke-width="0.0" xml:space="preserve">.min.css</text>
<circle cx="58.8" cy="588.0" r="13.3" fill="#dd7a2a"/>
<path d="M49.2,578.4 L68.4,597.6 M68.4,578.4 L49.2,597.6" stroke="#fde4c8" stroke-width="2.7"/>
<text transform="translate(79.00,596.00) scale(0.92,1)" font-family="Liberation Mono" font-size="24" letter-spacing="-1.357" fill="#111" stroke="#ffffff" stroke-width="0.0" xml:space="preserve">10.</text>
<rect x="121.4" y="573.1" width="187.7" height="26.1" fill="#ff0000" stroke="#c00000" stroke-width="0.8"/>
<text transform="translate(309.00,596.00) scale(0.92,1)" font-family="Liberation Mono" font-size="24" letter-spacing="-1.357" fill="#111" stroke="#ffffff" stroke-width="0.0" xml:space="preserve">.css</text>
<text transform="translate(45.00,630.00) scale(0.92,1)" font-family="Liberation Mono" font-size="24" letter-spacing="-1.357" fill="#111" stroke="#f0f0f0" stroke-width="0.0" xml:space="preserve">11. www.googletagmanager.com – gtm.js</text>
<text transform="translate(45.00,664.00) scale(0.92,1)" font-family="Liberation Mono" font-size="24" letter-spacing="-1.357" fill="#4040e0" stroke="#ffffff" stroke-width="0.0" xml:space="preserve">12. images.</text>
<rect x="178.0" y="646.1" width="300.1" height="21.4" fill="#ff0000" stroke="#c00000" stroke-width="0.8"/>
<text transform="translate(477.00,664.00) scale(0.92,1)" font-family="Liberation Mono" font-size="24" letter-spacing="-1.357" fill="#4040e0" stroke="#ffffff" stroke-width="0.0" xml:space="preserve">.svg</text>
<text transform="translate(45.00,698.00) scale(0.92,1)" font-family="Liberation Mono" font-size="24" letter-spacing="-1.357" fill="#4040e0" stroke="#f0f0f0" stroke-width="0.0" xml:space="preserve">13. images.</text>
<rect x="175.0" y="676.1" width="301.9" height="27.8" fill="#ff0000" stroke="#c00000" stroke-width="0.8"/>
<text transform="translate(477.00,698.00) scale(0.92,1)" font-family="Liberation Mono" font-size="24" letter-spacing="-1.357" fill="#4040e0" stroke="#f0f0f0" stroke-width="0.0" xml:space="preserve">.svg</text>
<text transform="translate(45.00,732.00) scale(0.92,1)" font-family="Liberation Mono" font-size="24" letter-spacing="-1.357" fill="#111" stroke="#ffffff" stroke-width="0.0" xml:space="preserve">14. images.</text>
<rect x="176.3" y="709.0" width="302.7" height="29.7" fill="#ff0000" stroke="#c00000" stroke-width="0.8"/>
<text transform="translate(477.00,732.00) scale(0.92,1)" font-family="Liberation Mono" font-size="24" letter-spacing="-1.357" fill="#111" stroke="#ffffff" stroke-width="0.0" xml:space="preserve">.jpg</text>
<text transform="translate(45.00,766.00) scale(0.92,1)" font-family="Liberation Mono" font-size="24" letter-spacing="-1.357" fill="#111" stroke="#f0f0f0" stroke-width="0.0" xml:space="preserve">15. images.</text>
<rect x="175.0" y="749.0" width="304.8" height="22.6" fill="#ff0000" stroke="#c00000" stroke-width="0.8"/>
<text transform="translate(477.00,766.00) scale(0.92,1)" font-family="Liberation Mono" font-size="24" letter-spacing="-1.357" fill="#111" stroke="#f0f0f0" stroke-width="0.0" xml:space="preserve">.jpg</text>
<text transform="translate(45.00,800.00) scale(0.92,1)" font-family="Liberation Mono" font-size="24" letter-spacing="-1.357" fill="#111" stroke="#ffffff" stroke-width="0.0" xml:space="preserve">16. images.</text>
<rect x="175.0" y="774.0" width="304.0" height="34.2" fill="#ff0000" stroke="#c00000" stroke-width="0.8"/>
<text transform="translate(477.00,800.00) scale(0.92,1)" font-family="Liberation Mono" font-size="24" letter-spacing="-1.357" fill="#111" stroke="#ffffff" stroke-width="0.0" xml:space="preserve">.jpg</text>
<text transform="translate(45.00,834.00) scale(0.92,1)" font-family="Liberation Mono" font-size="24" letter-spacing="-1.357" fill="#111" stroke="#f0f0f0" stroke-width="0.0" xml:space="preserve">17. images.</text>
<rect x="175.0" y="813.1" width="306.0" height="27.5" fill="#ff0000" stroke="#c00000" stroke-width="0.8"/>
<text transform="translate(477.00,834.00) scale(0.92,1)" font-family="Liberation Mono" font-size="24" letter-spacing="-1.357" fill="#111" stroke="#f0f0f0" stroke-width="0.0" xml:space="preserve">.jpg</text>
<text transform="translate(45.00,867.00) scale(0.92,1)" font-family="Liberation Mono" font-size="24" letter-spacing="-1.357" fill="#000" stroke="#ffffff" stroke-width="0.0" xml:space="preserve">...</text>
<text transform="translate(603.40,242.00) scale(0.92,1)" font-family="Liberation Mono" font-size="24" letter-spacing="-1.357" fill="#000" stroke="#ffffff" stroke-width="0.0" xml:space="preserve">0.5</text>
<text transform="translate(603.40,904.00) scale(0.92,1)" font-family="Liberation Mono" font-size="24" letter-spacing="-1.357" fill="#000" stroke="#ffffff" stroke-width="0.0" xml:space="preserve">0.5</text>
<text transform="translate(691.40,242.00) scale(0.92,1)" font-family="Liberation Mono" font-size="24" letter-spacing="-1.357" fill="#000" stroke="#ffffff" stroke-width="0.0" xml:space="preserve">1.0</text>
<text transform="translate(691.40,904.00) scale(0.92,1)" font-family="Liberation Mono" font-size="24" letter-spacing="-1.357" fill="#000" stroke="#ffffff" stroke-width="0.0" xml:space="preserve">1.0</text>
<text transform="translate(779.60,242.00) scale(0.92,1)" font-family="Liberation Mono" font-size="24" letter-spacing="-1.357" fill="#000" stroke="#ffffff" stroke-width="0.0" xml:space="preserve">1.5</text>
<text transform="translate(779.60,904.00) scale(0.92,1)" font-family="Liberation Mono" font-size="24" letter-spacing="-1.357" fill="#000" stroke="#ffffff" stroke-width="0.0" xml:space="preserve">1.5</text>
<text transform="translate(869.50,242.00) scale(0.92,1)" font-family="Liberation Mono" font-size="24" letter-spacing="-1.357" fill="#000" stroke="#ffffff" stroke-width="0.0" xml:space="preserve">2.0</text>
<text transform="translate(869.50,904.00) scale(0.92,1)" font-family="Liberation Mono" font-size="24" letter-spacing="-1.357" fill="#000" stroke="#ffffff" stroke-width="0.0" xml:space="preserve">2.0</text>
<text transform="translate(957.30,242.00) scale(0.92,1)" font-family="Liberation Mono" font-size="24" letter-spacing="-1.357" fill="#000" stroke="#ffffff" stroke-width="0.0" xml:space="preserve">2.5</text>
<text transform="translate(957.30,904.00) scale(0.92,1)" font-family="Liberation Mono" font-size="24" letter-spacing="-1.357" fill="#000" stroke="#ffffff" stroke-width="0.0" xml:space="preserve">2.5</text>
<text transform="translate(1045.50,242.00) scale(0.92,1)" font-family="Liberation Mono" font-size="24" letter-spacing="-1.357" fill="#000" stroke="#ffffff" stroke-width="0.0" xml:space="preserve">3.0</text>
<text transform="translate(1045.50,904.00) scale(0.92,1)" font-family="Liberation Mono" font-size="24" letter-spacing="-1.357" fill="#000" stroke="#ffffff" stroke-width="0.0" xml:space="preserve">3.0</text>
<text transform="translate(1135.10,242.00) scale(0.92,1)" font-family="Liberation Mono" font-size="24" letter-spacing="-1.357" fill="#000" stroke="#ffffff" stroke-width="0.0" xml:space="preserve">3.5</text>
<text transform="translate(1135.10,904.00) scale(0.92,1)" font-family="Liberation Mono" font-size="24" letter-spacing="-1.357" fill="#000" stroke="#ffffff" stroke-width="0.0" xml:space="preserve">3.5</text>
<text transform="translate(1223.40,242.00) scale(0.92,1)" font-family="Liberation Mono" font-size="24" letter-spacing="-1.357" fill="#000" stroke="#ffffff" stroke-width="0.0" xml:space="preserve">4.0</text>
<text transform="translate(1223.40,904.00) scale(0.92,1)" font-family="Liberation Mono" font-size="24" letter-spacing="-1.357" fill="#000" stroke="#ffffff" stroke-width="0.0" xml:space="preserve">4.0</text>
<text transform="translate(1311.60,242.00) scale(0.92,1)" font-family="Liberation Mono" font-size="24" letter-spacing="-1.357" fill="#000" stroke="#ffffff" stroke-width="0.0" xml:space="preserve">4.5</text>
<text transform="translate(1311.60,904.00) scale(0.92,1)" font-family="Liberation Mono" font-size="24" letter-spacing="-1.357" fill="#000" stroke="#ffffff" stroke-width="0.0" xml:space="preserve">4.5</text>
<text transform="translate(1401.20,242.00) scale(0.92,1)" font-family="Liberation Mono" font-size="24" letter-spacing="-1.357" fill="#000" stroke="#ffffff" stroke-width="0.0" xml:space="preserve">5.0</text>
<text transform="translate(1401.20,904.00) scale(0.92,1)" font-family="Liberation Mono" font-size="24" letter-spacing="-1.357" fill="#000" stroke="#ffffff" stroke-width="0.0" xml:space="preserve">5.0</text>
<text transform="translate(1489.30,242.00) scale(0.92,1)" font-family="Liberation Mono" font-size="24" letter-spacing="-1.357" fill="#000" stroke="#ffffff" stroke-width="0.0" xml:space="preserve">5.5</text>
<text transform="translate(1489.30,904.00) scale(0.92,1)" font-family="Liberation Mono" font-size="24" letter-spacing="-1.357" fill="#000" stroke="#ffffff" stroke-width="0.0" xml:space="preserve">5.5</text>
<text transform="translate(1577.50,242.00) scale(0.92,1)" font-family="Liberation Mono" font-size="24" letter-spacing="-1.357" fill="#000" stroke="#ffffff" stroke-width="0.0" xml:space="preserve">6.0</text>
<text transform="translate(1577.50,904.00) scale(0.92,1)" font-family="Liberation Mono" font-size="24" letter-spacing="-1.357" fill="#000" stroke="#ffffff" stroke-width="0.0" xml:space="preserve">6.0</text>
<text transform="translate(1667.20,242.00) scale(0.92,1)" font-family="Liberation Mono" font-size="24" letter-spacing="-1.357" fill="#000" stroke="#ffffff" stroke-width="0.0" xml:space="preserve">6.5</text>
<text transform="translate(1667.20,904.00) scale(0.92,1)" font-family="Liberation Mono" font-size="24" letter-spacing="-1.357" fill="#000" stroke="#ffffff" stroke-width="0.0" xml:space="preserve">6.5</text>
<text transform="translate(1755.30,242.00) scale(0.92,1)" font-family="Liberation Mono" font-size="24" letter-spacing="-1.357" fill="#000" stroke="#ffffff" stroke-width="0.0" xml:space="preserve">7.0</text>
<text transform="translate(1755.30,904.00) scale(0.92,1)" font-family="Liberation Mono" font-size="24" letter-spacing="-1.357" fill="#000" stroke="#ffffff" stroke-width="0.0" xml:space="preserve">7.0</text>
<text transform="translate(1843.00,242.00) scale(0.92,1)" font-family="Liberation Mono" font-size="24" letter-spacing="-1.357" fill="#000" stroke="#ffffff" stroke-width="0.0" xml:space="preserve">7.5</text>
<text transform="translate(1843.00,904.00) scale(0.92,1)" font-family="Liberation Mono" font-size="24" letter-spacing="-1.357" fill="#000" stroke="#ffffff" stroke-width="0.0" xml:space="preserve">7.5</text>
<text transform="translate(1933.40,242.00) scale(0.92,1)" font-family="Liberation Mono" font-size="24" letter-spacing="-1.357" fill="#000" stroke="#ffffff" stroke-width="0.0" xml:space="preserve">8.0</text>
<text transform="translate(1933.40,904.00) scale(0.92,1)" font-family="Liberation Mono" font-size="24" letter-spacing="-1.357" fill="#000" stroke="#ffffff" stroke-width="0.0" xml:space="preserve">8.0</text>
<text transform="translate(2021.30,242.00) scale(0.92,1)" font-family="Liberation Mono" font-size="24" letter-spacing="-1.357" fill="#000" stroke="#ffffff" stroke-width="0.0" xml:space="preserve">8.5</text>
<text transform="translate(2021.30,904.00) scale(0.92,1)" font-family="Liberation Mono" font-size="24" letter-spacing="-1.357" fill="#000" stroke="#ffffff" stroke-width="0.0" xml:space="preserve">8.5</text>
<path d="M534.3,1010.0 L534.3,954.9 L552.7,954.9 L552.7,994.6 L570.9,994.6 L570.9,950.9 L591.0,950.9 L591.0,920.8 L608.9,920.8 L608.9,930.8 L626.8,930.8 L626.8,984.6 L644.7,984.6 L644.7,990.8 L680.6,990.8 L680.6,958.8 L698.9,958.8 L698.9,994.6 L750.9,994.6 L750.9,943.0 L768.8,943.0 L768.8,990.8 L786.7,990.8 L786.7,986.7 L805.0,986.7 L805.0,994.6 L840.9,994.6 L840.9,992.5 L858.8,992.5 L858.8,974.8 L877.2,974.8 L877.2,986.7 L894.7,986.7 L894.7,1000.8 L912.9,1000.8 L912.9,990.8 L930.8,990.8 L930.8,946.6 L949.1,946.6 L949.1,986.7 L982.9,986.7 L982.9,994.6 L1000.8,994.6 L1000.8,1004.7 L1018.7,1004.7 L1018.7,994.6 L1036.6,994.6 L1036.6,988.6 L1055.3,988.6 L1055.3,1000.8 L1072.5,1000.8 L1072.5,994.6 L1090.8,994.6 L1090.8,986.7 L1109.1,986.7 L1109.1,944.9 L1127.0,944.9 L1127.0,994.6 L1145.3,994.6 L1145.3,992.5 L1162.9,992.5 L1162.9,988.6 L1181.1,988.6 L1181.1,994.6 L1196.9,994.6 L1196.9,1000.8 L1214.8,1000.8 L1214.8,986.7 L1233.2,986.7 L1233.2,998.9 L1250.7,998.9 L1250.7,994.6 L1269.0,994.6 L1269.0,986.7 L1286.8,986.7 L1286.8,934.8 L1335.0,934.8 L1335.0,990.8 L1353.2,990.8 L1353.2,994.6 L1371.2,994.6 L1371.2,992.8 L1389.1,992.8 L1389.1,994.6 L1407.0,994.6 L1407.0,1000.8 L1422.7,1000.8 L1422.7,994.6 L1459.0,994.6 L1459.0,949.0 L1476.9,949.0 L1476.9,980.7 L1494.8,980.7 L1494.8,994.6 L1512.7,994.6 L1512.7,1000.8 L1531.0,1000.8 L1531.0,994.6 L1620.7,994.6 L1620.7,988.9 L1636.8,988.9 L1636.8,949.0 L1655.1,949.0 L1655.1,982.9 L1673.0,982.9 L1673.0,952.8 L1690.9,952.8 L1690.9,926.8 L1797.0,926.8 L1797.0,914.2 L1832.9,914.2 L1832.9,920.5 L1850.8,920.5 L1850.8,936.8 L1868.7,936.8 L1868.7,940.6 L1887.0,940.6 L1887.0,946.9 L1905.0,946.9 L1905.0,934.8 L1922.5,934.8 L1922.5,938.8 L1940.8,938.8 L1940.8,924.7 L1976.9,924.7 L1976.9,938.8 L2001.0,938.8 L2001.0,914.6 L2053.0,914.6" fill="none" stroke="#ec9046" stroke-width="2.2" stroke-linejoin="miter"/>
<path d="M534.0,1108.0 L534.0,1012.3 L1144.5,1012.3 L1144.5,1014.9 L1196.7,1014.9 L1196.7,1031.0 L1214.3,1031.0 L1214.3,1107.0 L1690.8,1107.0 L1690.8,1048.9 L1797.3,1048.9 L1797.3,1107.0 L2000.4,1107.0 L2000.4,1032.7 L2019.2,1032.7 L2019.2,1012.6 L2053.0,1012.6" fill="none" stroke="#3f8a2e" stroke-width="1.9"/>
<polygon points="1668.2,1206.0 1668.2,1180.2 1670.2,1180.2 1670.2,1109.5 1679.8,1109.5 1679.8,1184.0 1681.7,1184.0 1681.7,1206.0" fill="#9483e0"/>
<polygon points="1710.3,1206.0 1710.3,1195.4 1713.5,1195.4 1713.5,1180.6 1715.9,1180.6 1715.9,1206.0" fill="#9483e0"/>
<polygon points="1734.5,1206.0 1734.5,1128.6 1737.0,1128.6 1737.0,1112.0 1744.0,1112.0 1744.0,1109.5 1762.5,1109.5 1762.5,1109.5 1765.0,1109.5 1765.0,1109.5 1779.7,1109.5 1779.7,1109.5 1782.1,1109.5 1782.1,1109.5 1796.7,1109.5 1796.7,1112.0 1800.0,1112.0 1800.0,1109.5 1801.6,1109.5 1801.6,1134.3 1804.1,1134.3 1804.1,1153.8 1808.1,1153.8 1808.1,1121.3 1810.5,1121.3 1810.5,1161.9 1814.2,1161.9 1814.2,1135.9 1816.2,1135.9 1816.2,1147.3 1817.9,1147.3 1817.9,1111.5 1821.5,1111.5 1821.5,1150.5 1824.4,1150.5 1824.4,1142.4 1826.0,1142.4 1826.0,1157.8 1828.0,1157.8 1828.0,1132.6 1829.6,1132.6 1829.6,1157.0 1833.7,1157.0 1833.7,1137.5 1836.1,1137.5 1836.1,1155.4 1839.8,1155.4 1839.8,1170.0 1843.9,1170.0 1843.9,1162.0 1845.5,1162.0 1845.5,1157.0 1848.7,1157.0 1848.7,1155.0 1850.4,1155.0 1850.4,1206.0" fill="#e9c25e"/>
<rect x="1762.60" y="1109.50" width="2.40" height="16.00" fill="#b8b8b8" />
<rect x="1774.00" y="1109.50" width="1.80" height="41.00" fill="#b8b8b8" />
<rect x="1779.70" y="1109.50" width="2.40" height="36.50" fill="#ffffff" />
<rect x="1783.70" y="1109.50" width="2.10" height="26.00" fill="#b8b8b8" />
<rect x="1828.00" y="1132.60" width="1.60" height="74.00" fill="#b8b8b8" />
<rect x="1843.90" y="1162.00" width="1.60" height="44.00" fill="#b8b8b8" />
<polygon points="1736.3,1206.0 1736.3,1120.0 1737.5,1109.5 1743.7,1109.5 1743.7,1206.0" fill="#6f9fe0"/>
<polygon points="1734.4,1206.0 1734.4,1143.0 1736.5,1143.0 1736.5,1206.0" fill="#9483e0"/>
<polygon points="1849.6,1206.0 1849.6,1109.5 1853.0,1109.5 1853.0,1140.0 1856.0,1140.0 1856.0,1163.0 1858.0,1163.0 1858.0,1125.0 1860.5,1125.0 1860.5,1109.5 1863.0,1109.5 1863.0,1130.0 1865.5,1130.0 1865.5,1163.0 1868.0,1163.0 1868.0,1109.5 1882.0,1109.5 1882.0,1125.0 1883.0,1125.0 1883.0,1145.0 1884.5,1145.0 1884.5,1125.0 1886.0,1125.0 1886.0,1109.5 1889.0,1109.5 1889.0,1152.0 1891.7,1152.0 1891.7,1206.0" fill="#9483e0"/>
<rect x="1883.00" y="1125.00" width="2.00" height="30.00" fill="#e9c25e" />
<rect x="1863.70" y="1123.00" width="4.30" height="40.00" fill="#e9c25e" />
<rect x="1891.70" y="1131.80" width="2.10" height="60.00" fill="#e9c25e" />
<polygon points="1891.7,1206.0 1891.7,1192.0 1902.0,1192.0 1902.0,1176.0 1905.0,1176.0 1905.0,1192.0 1913.0,1192.0 1913.0,1109.5 1916.6,1109.5 1916.6,1109.5 1923.0,1109.5 1923.0,1109.5 1928.0,1109.5 1928.0,1125.0 1931.0,1125.0 1931.0,1160.0 1935.0,1160.0 1935.0,1185.0 1937.0,1185.0 1937.0,1165.0 1940.0,1165.0 1940.0,1146.0 1944.0,1146.0 1944.0,1195.0 1948.0,1195.0 1948.0,1195.0 1955.0,1195.0 1955.0,1202.0 1958.0,1202.0 1958.0,1170.0 1963.0,1170.0 1963.0,1121.0 1966.0,1121.0 1966.0,1157.0 1968.0,1157.0 1968.0,1188.0 1976.0,1188.0 1976.0,1175.0 1980.0,1175.0 1980.0,1185.0 1982.2,1185.0 1982.2,1172.0 1984.0,1172.0 1984.0,1126.0 1986.0,1126.0 1986.0,1143.0 1988.2,1143.0 1988.2,1109.5 1995.9,1109.5 1995.9,1120.0 1998.0,1120.0 1998.0,1113.6 2000.5,1113.6 2000.5,1136.6 2004.0,1136.6 2004.0,1111.0 2008.2,1111.0 2008.2,1120.0 2009.9,1120.0 2009.9,1113.6 2012.4,1113.6 2012.4,1124.7 2014.1,1124.7 2014.1,1109.5 2020.1,1109.5 2020.1,1127.0 2022.0,1127.0 2022.0,1206.0" fill="#e9c25e"/>
<rect x="1916.60" y="1109.50" width="6.40" height="96.50" fill="#9483e0" />
<rect x="1943.00" y="1138.00" width="1.80" height="68.00" fill="#b8b8b8" />
<rect x="1952.00" y="1142.00" width="2.00" height="64.00" fill="#b8b8b8" />
<rect x="1976.00" y="1175.00" width="3.00" height="31.00" fill="#b8b8b8" />
<polygon points="2020.0,1206.0 2020.0,1180.0 2021.0,1118.0 2024.0,1118.0 2024.0,1206.0" fill="#9483e0"/>
<polygon points="2022.0,1206.0 2022.0,1118.0 2026.0,1118.0 2026.0,1206.0" fill="#6f9fe0"/>
<polygon points="2026.0,1206.0 2026.0,1145.0 2029.0,1145.0 2029.0,1206.0" fill="#7fb87a"/>
<rect x="2034.60" y="1198.00" width="1.80" height="8.00" fill="#b8b8b8" />
<rect x="2045.60" y="1198.00" width="2.60" height="8.00" fill="#e9c25e" />
<rect x="2050.00" y="1168.00" width="2.50" height="38.00" fill="#e9c25e" />
<rect x="1745.00" y="1204.50" width="105.00" height="1.50" fill="#6f9fe0" />
<rect x="1824.40" y="1200.00" width="6.50" height="6.00" fill="#6f9fe0" />
<rect x="1893.80" y="1203.50" width="19.20" height="2.50" fill="#6f9fe0" />
<rect x="1932.00" y="1203.00" width="18.00" height="3.00" fill="#6f9fe0" />
<rect x="1952.00" y="1201.00" width="11.00" height="5.00" fill="#6f9fe0" />
<rect x="1966.00" y="1200.00" width="18.00" height="6.00" fill="#6f9fe0" />
<rect x="1975.00" y="1192.00" width="4.00" height="14.00" fill="#6f9fe0" />
<rect x="590.00" y="1201.00" width="1.60" height="5.00" fill="#6f9fe0" />
<rect x="51.70" y="959.60" width="72.00" height="2.00" fill="#ec9046" />
<text transform="translate(131.00,970.40) scale(0.92,1)" font-family="Liberation Mono" font-size="24" letter-spacing="-1.357" fill="#000" stroke="#ffffff" stroke-width="0.0" xml:space="preserve">CPU Utilization</text>
<rect x="51.80" y="1058.00" width="72.00" height="2.00" fill="#3f8a2e" />
<text transform="translate(131.00,1068.40) scale(0.92,1)" font-family="Liberation Mono" font-size="24" letter-spacing="-1.357" fill="#000" stroke="#ffffff" stroke-width="0.0" xml:space="preserve">Bandwidth In (0 – 5,000 Kbps)</text>
<text transform="translate(131.00,1166.30) scale(0.92,1)" font-family="Liberation Mono" font-size="24" letter-spacing="-1.357" fill="#000" stroke="#ffffff" stroke-width="0.0" xml:space="preserve">Browser Main Thread</text>
<text transform="translate(131.00,1232.60) scale(0.92,1)" font-family="Liberation Mono" font-size="24" letter-spacing="-1.357" fill="#000" stroke="#ffffff" stroke-width="0.0" xml:space="preserve">Long Tasks</text>
<rect x="33.00" y="912.00" width="2022.00" height="2.00" fill="#2a2a2a" />
<rect x="33.00" y="1010.00" width="2022.00" height="2.00" fill="#2a2a2a" />
<rect x="33.00" y="1108.00" width="2022.00" height="2.00" fill="#2a2a2a" />
<rect x="33.00" y="1206.00" width="2022.00" height="2.00" fill="#2a2a2a" />
<rect x="532.00" y="215.00" width="2.00" height="1026.00" fill="#222" />
<rect x="33" y="215" width="2022" height="1026" fill="none" stroke="#000" stroke-width="2"/>
<rect x="2056.00" y="216.00" width="36.00" height="1030.00" fill="#ffffff" />
<line x1="2060" y1="75.9" x2="2060" y2="1254" stroke="#2f7d22" stroke-width="4" stroke-dasharray="11.6 8.51"/></svg>
</body></html>
